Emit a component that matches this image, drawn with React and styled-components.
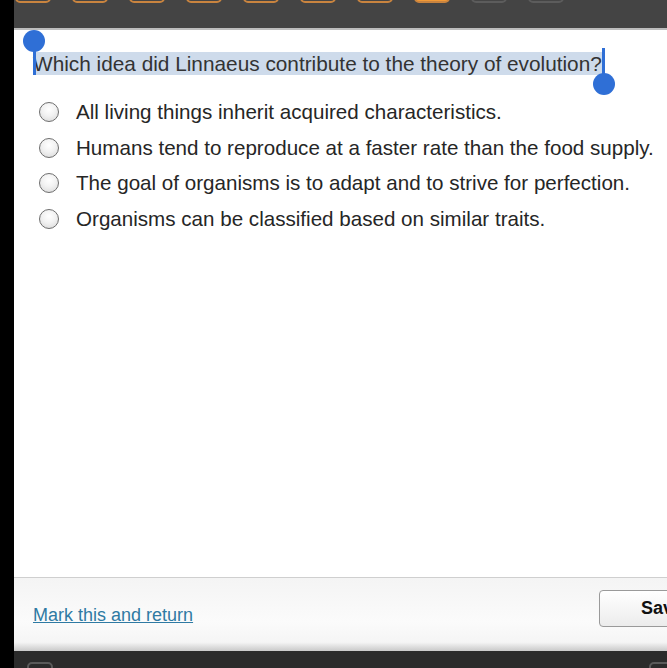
import React from 'react';
import styled, { createGlobalStyle } from 'styled-components';

const GlobalStyle = createGlobalStyle`
  html, body {
    margin: 0;
    padding: 0;
    background: #000;
    overflow: hidden;
  }
  body {
    font-family: 'Liberation Sans', Arial, Helvetica, sans-serif;
  }
`;

const Screen = styled.div`
  display: flex;
  width: 667px;
  height: 668px;
  overflow: hidden;
  background: #000;
`;

const Strip = styled.div`
  width: 14px;
  flex-shrink: 0;
  background: #000;
`;

const Main = styled.div`
  flex: 1;
  display: flex;
  flex-direction: column;
  min-width: 0;
  background: #fff;
`;

const TopBar = styled.div`
  height: 28px;
  background: #444444;
  border-bottom: 2px solid #bdbdbd;
  display: flex;
  gap: 21px;
  padding-left: 1px;
  overflow: hidden;
`;

const Tab = styled.div`
  width: 36px;
  height: 34px;
  margin-top: -31px;
  box-sizing: border-box;
  border-radius: 5px;
  border: 2px solid ${p => (p.$kind === 'empty' ? '#5c5c5c' : '#c9843f')};
  background: ${p => (p.$kind === 'current' ? '#f39a36' : '#454545')};
`;

const Content = styled.div`
  flex: 1;
  padding: 22px 0 0 19px;
`;

const QuestionWrap = styled.div`
  position: relative;
  display: inline-block;
`;

const Question = styled.div`
  font-size: 20.8px;
  line-height: 23px;
  color: #333;
  background: #cedbeb;
  padding-right: 1px;
  white-space: nowrap;
`;

const Caret = styled.div`
  position: absolute;
  width: 3px;
  background: #2f6fd6;
  top: ${p => p.$top}px;
  height: ${p => p.$height}px;
  ${p => (p.$end ? 'right: -2px;' : 'left: 0;')}
`;

const Knob = styled.div`
  position: absolute;
  width: 22px;
  height: 22px;
  border-radius: 50%;
  background: #2f6fd6;
  top: ${p => p.$top}px;
  ${p => (p.$end ? 'right: -12px;' : 'left: -10px;')}
`;

const Options = styled.div`
  display: flex;
  flex-direction: column;
  margin-top: 18px;
`;

const Option = styled.label`
  display: flex;
  align-items: center;
  height: 35.7px;
  gap: 17px;
  padding-left: 6px;
  font-size: 20.6px;
  color: #262626;
  white-space: nowrap;
  &:first-child {
    margin-top: 1px;
  }
`;

const Radio = styled.span`
  width: 18px;
  height: 18px;
  border-radius: 50%;
  border: 1.5px solid #6e6e6e;
  background: radial-gradient(circle at 50% 35%, #ffffff 0%, #f2f2f2 45%, #d6d6d6 100%);
  flex-shrink: 0;
`;

const Footer = styled.div`
  height: 73px;
  border-top: 1px solid #cfcfcf;
  background: linear-gradient(#f4f4f4, #fbfbfb 60%, #f5f5f5 88%, #c9c9c9);
  display: flex;
  align-items: center;
  padding-left: 19px;
`;

const MarkLink = styled.a`
  font-size: 18px;
  color: #2f7aa3;
  text-decoration: underline;
  margin-top: 2px;
`;

const SaveButton = styled.button`
  margin-left: auto;
  margin-right: -60px;
  margin-top: -12px;
  width: 128px;
  flex-shrink: 0;
  height: 37px;
  padding: 0 0 0 41px;
  text-align: left;
  border: 1px solid #9a9a9a;
  border-radius: 4px;
  background: linear-gradient(#ffffff, #ececec);
  font-family: 'Liberation Sans', Arial, sans-serif;
  font-weight: bold;
  font-size: 18px;
  color: #111;
  white-space: nowrap;
  overflow: hidden;
`;

const BottomBar = styled.div`
  height: 17px;
  background: #2b2b2b;
  display: flex;
  justify-content: space-between;
  padding: 0 0 0 13px;
  overflow: hidden;
`;

const SmallBox = styled.div`
  width: 22px;
  height: 20px;
  margin-top: 11px;
  border: 2px solid #5a5a5a;
  border-radius: 5px;
  margin-right: ${p => (p.$right ? '-8px' : '0')};
`;

const tabs = ['done', 'done', 'done', 'done', 'done', 'done', 'done', 'current', 'empty', 'empty'];

const answers = [
  'All living things inherit acquired characteristics.',
  'Humans tend to reproduce at a faster rate than the food supply.',
  'The goal of organisms is to adapt and to strive for perfection.',
  'Organisms can be classified based on similar traits.',
];

export default function App() {
  return (
    <>
      <GlobalStyle />
      <Screen>
        <Strip />
        <Main>
          <TopBar>
            {tabs.map((t, i) => (
              <Tab key={i} $kind={t} />
            ))}
          </TopBar>
          <Content>
            <QuestionWrap>
              <Question>Which idea did Linnaeus contribute to the theory of evolution?</Question>
              <Caret $top={-12} $height={35} />
              <Knob $top={-22} />
              <Caret $end $top={-4} $height={32} />
              <Knob $end $top={21} />
            </QuestionWrap>
            <Options>
              {answers.map((a, i) => (
                <Option key={i}>
                  <Radio />
                  {a}
                </Option>
              ))}
            </Options>
          </Content>
          <Footer>
            <MarkLink href="#">Mark this and return</MarkLink>
            <SaveButton>Save</SaveButton>
          </Footer>
          <BottomBar>
            <SmallBox />
            <SmallBox $right />
          </BottomBar>
        </Main>
      </Screen>
    </>
  );
}
